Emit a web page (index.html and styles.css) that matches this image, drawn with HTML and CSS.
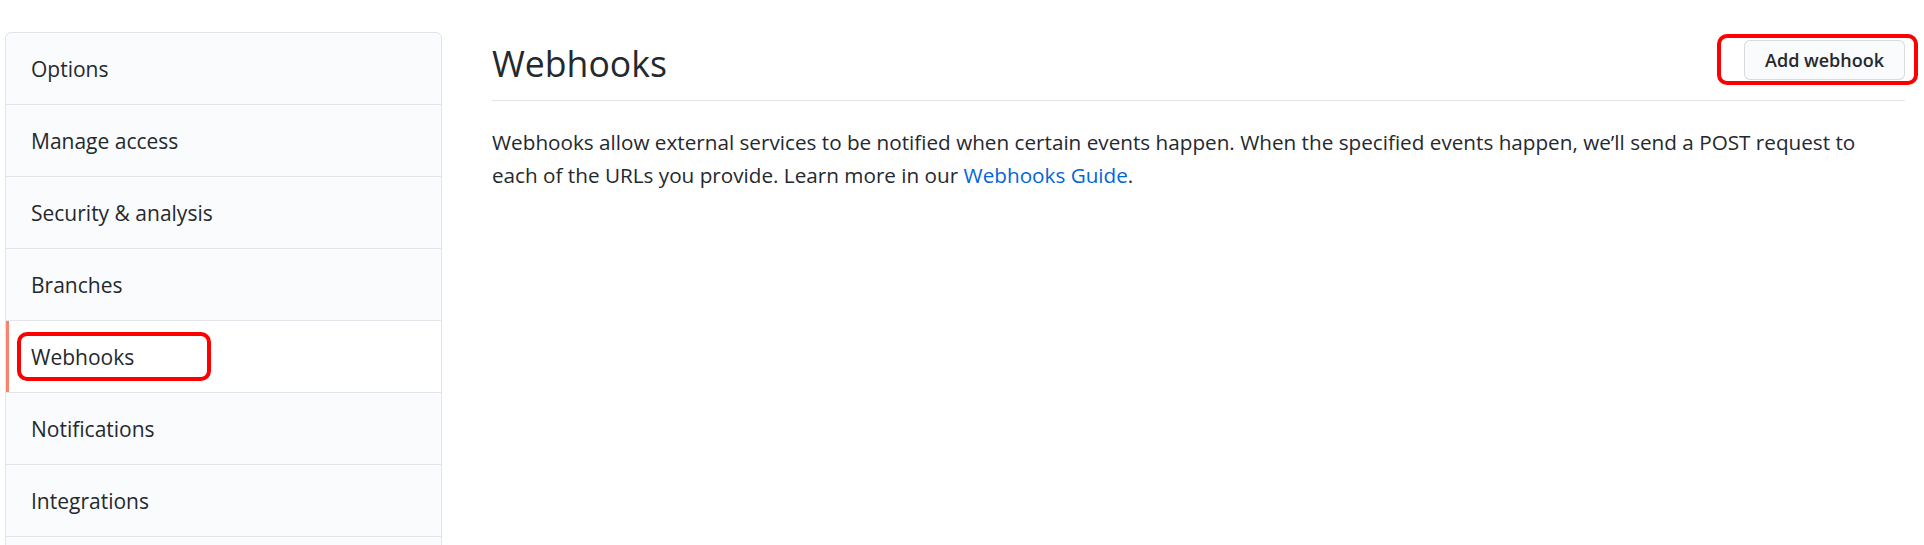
FILE: index.html
```html
<!DOCTYPE html>
<html lang="en">
<head>
  <meta charset="UTF-8" />
  <meta name="viewport" content="width=device-width, initial-scale=1.0" />
  <title>Webhooks</title>
  <link rel="stylesheet" href="styles.css">
</head>
<body>
  <div class="layout">
    <nav class="menu">
      <a class="menu-item" href="#">Options</a>
      <a class="menu-item" href="#">Manage access</a>
      <a class="menu-item" href="#">Security &amp; analysis</a>
      <a class="menu-item" href="#">Branches</a>
      <a class="menu-item selected" href="#"><span class="mark mark-menu">Webhooks</span></a>
      <a class="menu-item" href="#">Notifications</a>
      <a class="menu-item" href="#">Integrations</a>
      <a class="menu-item" href="#">Deploy keys</a>
    </nav>

    <main class="content">
      <div class="subhead">
        <h2 class="subhead-title">Webhooks</h2>
        <span class="mark mark-btn"><button class="btn">Add webhook</button></span>
      </div>
      <p class="intro">
        Webhooks allow external services to be notified when certain events happen. When the specified events happen, we’ll send a POST request to
        each of the URLs you provide. Learn more in our <a href="#">Webhooks Guide</a>.
      </p>
    </main>
  </div>
</body>
</html>
```

FILE: styles.css
```css
body {
  margin: 0;
  background: #fff;
  color: #24292e;
  font-family: "Open Sans", "Liberation Sans", sans-serif;
  font-size: 21px;
  overflow: hidden;
}
.layout {
  display: flex;
  align-items: flex-start;
  padding: 32px 19px 0 5px;
}
.menu {
  width: 437px;
  flex: none;
  box-sizing: border-box;
  background: #fafbfc;
  border: 1px solid #e1e4e8;
  border-radius: 6px;
  overflow: hidden;
}
.menu-item {
  display: flex;
  align-items: center;
  height: 71px;
  padding-left: 25px;
  border-bottom: 1px solid #e1e4e8;
  color: #24292e;
  text-decoration: none;
}
.menu-item.selected {
  background: #fff;
  box-shadow: inset 3px 0 0 #f9826c;
}
.mark {
  border: 4px solid #ff0000;
  border-radius: 10px;
  box-sizing: border-box;
}
.mark-menu {
  display: flex;
  align-items: center;
  width: 194px;
  height: 49px;
  margin-left: -14px;
  padding-left: 10px;
}
.content {
  flex: 1;
  margin-left: 50px;
}
.subhead {
  display: flex;
  justify-content: space-between;
  align-items: flex-start;
  padding: 4px 0 10px;
  border-bottom: 1px solid #e1e4e8;
}
.subhead-title {
  margin: 0;
  font-size: 35.6px;
  font-weight: 400;
  line-height: 54px;
}
.mark-btn {
  display: block;
  margin: -2px -13px -5px -27px;
  padding: 2px 9px 1px 23px;
}
.btn {
  display: block;
  height: 40px;
  padding: 0 20px;
  font-family: inherit;
  font-size: 18px;
  font-weight: 600;
  color: #24292e;
  background: #fafbfc;
  border: 1px solid rgba(27, 31, 35, 0.15);
  border-radius: 6px;
}
.intro {
  margin: 25px 0 0;
  padding-right: 16px;
  font-size: 20.7px;
  line-height: 33px;
}
.intro a {
  color: #0366d6;
  text-decoration: none;
}
```
